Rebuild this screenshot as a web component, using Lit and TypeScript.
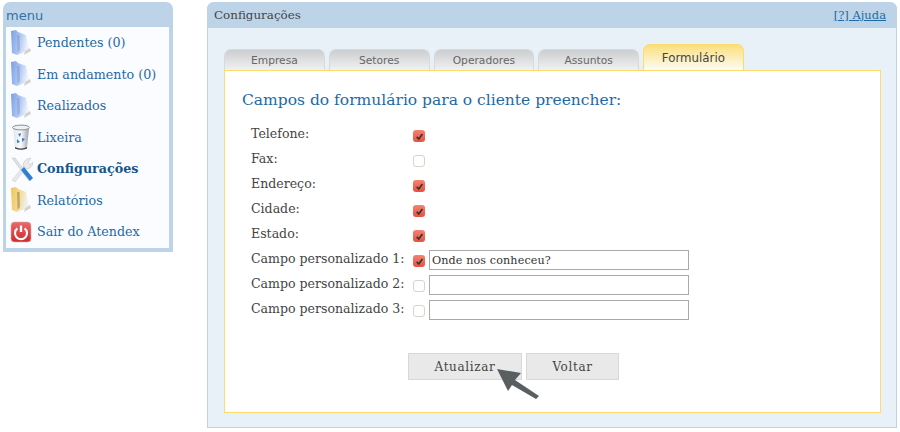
import { LitElement, html, css, svg } from "lit";
import { customElement } from "lit/decorators.js";

const folder = (id: string, light: string, dark: string, spine: string) => html`<svg class="ico" width="24" height="28" viewBox="0 0 24 28">
  <defs><linearGradient id=${id} x1="0" y1="0" x2="1" y2="0.25"><stop offset="0" stop-color=${dark}/><stop offset="0.5" stop-color=${light}/><stop offset="1" stop-color="#eef2fb"/></linearGradient></defs>
  <path d="M2 2 L7 1 L9 3 L17 6 L20 21 L8 26 L3 24 Z" fill="url(#${id})"/>
  <path d="M8 6 L10.5 6 L11 21 L8.5 24 Z" fill=${spine} opacity="0.5"/>
  <path d="M16 22 L21 19 L22 22 L15 26 Z" fill="#d4d4cf"/>
</svg>`;

const trash = html`<svg class="ico" width="24" height="28" viewBox="0 0 24 28">
  <defs><linearGradient id="tg" x1="0" y1="0" x2="1" y2="0"><stop offset="0" stop-color="#dfe6ea"/><stop offset="0.5" stop-color="#f9fafb"/><stop offset="1" stop-color="#9aa1a5"/></linearGradient></defs>
  <path d="M4 5 L20 5 L18 25 Q12 28 6 25 Z" fill="url(#tg)"/>
  <ellipse cx="12" cy="4.5" rx="8.5" ry="2.4" fill="#eef1f3" stroke="#8a9094" stroke-width="1"/>
  <path d="M9 11 L12 10 L11 14 Z M13 15 L16 16 L13 19 Z M8 16 L11 19 L8 20 Z" fill="#2f7fd0"/>
  <path d="M6 24 Q12 27 18 24 L18 25.5 Q12 28 6 25.5 Z" fill="#3a3d40"/>
</svg>`;

const tools = html`<svg class="ico" width="24" height="28" viewBox="0 0 24 28">
  <path d="M3 3 L6 3 L22 24 L20 26 Z" fill="#dfe2e3" stroke="#b8bdc0" stroke-width="0.5"/>
  <path d="M3 25 L15 11 L17 13 L6 27 Z" fill="#e8eaea" stroke="#c2c6c8" stroke-width="0.5"/>
  <path d="M12 15 L15 12 L24 23 L21 26 Z" fill="#2f7fd0"/>
  <path d="M14 10 Q15 4 22 3 L19 7 L21 10 L24 7 Q24 13 17 14 Z" fill="#e9ebec" stroke="#b3b8ba" stroke-width="0.5"/>
</svg>`;

const power = html`<svg class="ico" width="24" height="28" viewBox="0 0 24 28">
  <defs><linearGradient id="pg" x1="0" y1="0" x2="0" y2="1"><stop offset="0" stop-color="#e96a68"/><stop offset="1" stop-color="#cf2a2c"/></linearGradient></defs>
  <rect x="2" y="4" width="20" height="20" rx="3.5" fill="url(#pg)" stroke="#d2b0b0" stroke-width="0.6"/>
  <path d="M8.4 10.4 A6 6 0 1 0 15.6 10.4" fill="none" stroke="#fff" stroke-width="2.1"/>
  <path d="M12 7.5 L12 14" stroke="#fff" stroke-width="2.3"/>
</svg>`;

const menuItems = [
  { t: "Pendentes (0)", i: folder("f1", "#a9c3f2", "#7a9fe6", "#7f97c4") },
  { t: "Em andamento (0)", i: folder("f2", "#a9c3f2", "#7a9fe6", "#7f97c4") },
  { t: "Realizados", i: folder("f3", "#a9c3f2", "#7a9fe6", "#7f97c4") },
  { t: "Lixeira", i: trash },
  { t: "Configurações", i: tools, active: true },
  { t: "Relatórios", i: folder("f4", "#f6d98c", "#eec35e", "#8a7440") },
  { t: "Sair do Atendex", i: power },
];

const tabs = ["Empresa", "Setores", "Operadores", "Assuntos"];

const fields: { l: string; c: boolean; v?: string }[] = [
  { l: "Telefone:", c: true },
  { l: "Fax:", c: false },
  { l: "Endereço:", c: true },
  { l: "Cidade:", c: true },
  { l: "Estado:", c: true },
  { l: "Campo personalizado 1:", c: true, v: "Onde nos conheceu?" },
  { l: "Campo personalizado 2:", c: false, v: "" },
  { l: "Campo personalizado 3:", c: false, v: "" },
];

const check = (on: boolean) => html`<span class="cb ${on ? "on" : ""}">${on
  ? svg`<svg width="11" height="11" viewBox="0 0 11 11"><path d="M2.7 5.8 L4.8 8 L8.4 3" fill="none" stroke="#3a3331" stroke-width="1.7"/></svg>`
  : ""}</span>`;

@customElement("app-root")
export class AppRoot extends LitElement {
  static styles = css`
    :host { display: block; width: 900px; height: 432px; overflow: hidden; background: #fff; font-family: "DejaVu Serif", serif; font-size: 12.7px; }
    .page { display: flex; align-items: flex-start; padding: 2px 3px 0 3px; gap: 34px; }
    .side { width: 170px; height: 250px; box-sizing: border-box; background: #bdd4e8; border-radius: 7px 7px 0 0; padding: 0 4px 4px 3px; display: flex; flex-direction: column; }
    .side-h { height: 25px; line-height: 27px; font-family: "DejaVu Sans", sans-serif; font-size: 13px; color: #2f73a6; padding-left: 0; }
    .list { flex: 1; background: #fbfcff; }
    .item { display: flex; align-items: center; height: 31.5px; gap: 4px; padding-left: 3px; color: #1d6aa5; white-space: nowrap; }
    .item.active { font-weight: 700; color: #14558c; }
    .ico { flex: none; filter: blur(0.35px); }
    .main { width: 690px; height: 426px; box-sizing: border-box; background: #e8f0f8; border: 1px solid #bdd4e8; border-top: 0; border-radius: 7px 7px 0 0; display: flex; flex-direction: column; }
    .main-h { height: 26px; margin: 0 -1px; background: #bdd4e8; border-radius: 7px 7px 0 0; display: flex; justify-content: space-between; align-items: center; padding: 0 11px 0 7px; color: #444; font-size: 11.9px; }
    .main-h a { color: #1d6aa5; text-decoration: underline; font-size: 11.5px; }
    .wrap { padding: 16px 15px 14px 16px; flex: 1; display: flex; flex-direction: column; }
    .tabs { display: flex; align-items: flex-end; gap: 4px; height: 26px; }
    .tab { width: 100.75px; box-sizing: border-box; height: 21px; border: 1px solid #d6dadd; border-bottom: 0; border-radius: 7px 7px 0 0; background: linear-gradient(#cbcdcf, #f0f1f2); color: #666; font-family: "DejaVu Sans", sans-serif; font-size: 10.7px; text-align: center; line-height: 22px; }
    .tab.sel { height: 27px; background: linear-gradient(#fbdf7c, #fdfdfb); border-color: #fbdc6c; color: #444; font-size: 11.8px; line-height: 27px; margin-bottom: -1px; position: relative; }
    .box { flex: 1; box-sizing: border-box; background: #fff; border: 1px solid #fbdc6c; padding: 19px 17px 0 17px; position: relative; }
    h2 { margin: 0 0 12px; font-weight: 400; font-size: 15.5px; line-height: 20px; color: #1d6aa5; }
    .form { display: grid; grid-template-columns: 162px 16px 260px; grid-auto-rows: 25px; align-items: center; padding-left: 9px; color: #444; font-size: 12.55px; }
    .form .lab { white-space: nowrap; margin-top: -3px; }
    .cb { width: 12px; height: 12px; box-sizing: border-box; border: 1px solid #d9d4cb; border-radius: 3px; background: #fff; display: block; margin-top: 2px; }
    .cb.on { border: 0; background: linear-gradient(#f48373, #e8503f); }
    .cb svg { display: block; margin: 1px 0 0 1px; }
    .inp { width: 260px; height: 20px; box-sizing: border-box; border: 1px solid #aaa; background: #fff; font-family: "DejaVu Serif", serif; font-size: 11.2px; color: #333; line-height: 19px; padding: 0 2px; letter-spacing: 0.1px; }
    .btns { display: flex; gap: 4px; margin-top: 31px; padding-left: 166px; }
    .btn { height: 27px; box-sizing: border-box; border: 1px solid #d8d8d8; background: #e9e9e9; color: #444; font-size: 12px; letter-spacing: 0.65px; display: flex; align-items: center; justify-content: center; }
    .arrow { position: absolute; left: 272px; top: 298px; }
  `;

  render() {
    return html`<div class="page">
      <nav class="side">
        <div class="side-h">menu</div>
        <div class="list">
          ${menuItems.map((m) => html`<div class="item ${m.active ? "active" : ""}">${m.i}<span>${m.t}</span></div>`)}
        </div>
      </nav>
      <section class="main">
        <header class="main-h"><span>Configurações</span><a>[?] Ajuda</a></header>
        <div class="wrap">
          <div class="tabs">
            ${tabs.map((t) => html`<div class="tab">${t}</div>`)}
            <div class="tab sel">Formulário</div>
          </div>
          <div class="box">
            <h2>Campos do formulário para o cliente preencher:</h2>
            <div class="form">
              ${fields.map((f) => html`
                <span class="lab">${f.l}</span>
                ${check(f.c)}
                ${f.v !== undefined ? html`<div class="inp">${f.v}</div>` : html`<span></span>`}
              `)}
            </div>
            <div class="btns">
              <div class="btn" style="width:114px">Atualizar</div>
              <div class="btn" style="width:93px">Voltar</div>
            </div>
            <svg class="arrow" width="44" height="34" viewBox="0 0 44 34">
              <path d="M0 0 L24 4 L18 11 L42 27 L39 30 L15 16 L11 22 Z" fill="#595e60"/>
            </svg>
          </div>
        </div>
      </section>
    </div>`;
  }
}
